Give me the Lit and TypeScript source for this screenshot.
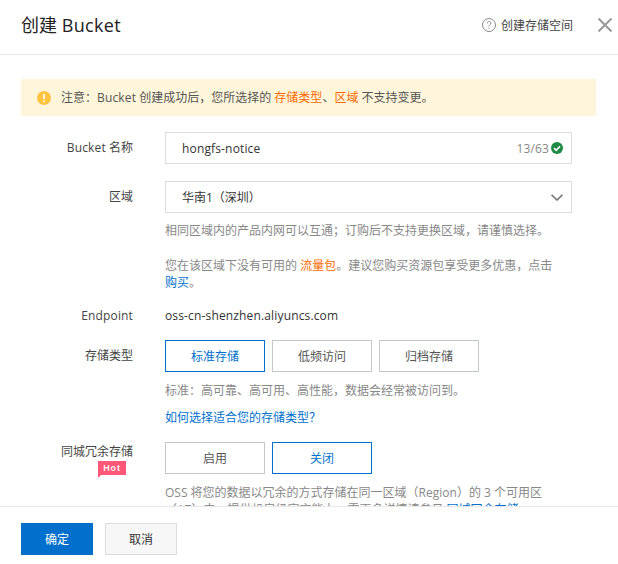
import { LitElement, html, css } from "lit";
import { customElement } from "lit/decorators.js";

@customElement("app-root")
export class AppRoot extends LitElement {
  static styles = css`
    :host {
      display: flex;
      flex-direction: column;
      width: 618px;
      height: 564px;
      background: #fff;
      overflow: hidden;
      font-family: "Open Sans", "Noto Sans CJK SC", sans-serif;
      font-size: 12px;
      line-height: 17px;
      color: #333;
    }
    a { text-decoration: none; }
    .lat { letter-spacing: 0.15px; }
    .header {
      flex: none;
      height: 55px;
      box-sizing: border-box;
      border-bottom: 1px solid #e8e8e8;
      display: flex;
      align-items: center;
      padding: 0 6px 4px 21px;
    }
    .title { font-size: 18px; line-height: 24px; color: #222; flex: 1; }
    .title .lat { letter-spacing: 0.35px; }
    .help { display: flex; align-items: center; gap: 5px; color: #444; margin-right: 25px; }
    .help svg, .close { display: block; }
    .body {
      flex: 1;
      min-height: 0;
      overflow: hidden;
      padding: 24px 22px 0 21px;
    }
    .banner {
      height: 37px;
      background: #fff5db;
      display: flex;
      align-items: center;
      gap: 10px;
      padding-left: 16px;
      color: #555;
      margin-bottom: 16px;
    }
    .hl { color: #ff6a00; }
    .row {
      display: grid;
      grid-template-columns: 112px 407px;
      column-gap: 32px;
    }
    .label { display: flex; flex-direction: column; text-align: right; color: #444; }
    .hot {
      position: relative;
      align-self: flex-end;
      margin: 1px 7px 0 0;
      width: 28px;
      height: 14px;
      background: #ff5777;
      color: #fbeef1;
      font-family: "Liberation Sans", sans-serif;
      font-size: 9px;
      font-weight: 700;
      letter-spacing: 0.8px;
      line-height: 14px;
      text-align: center;
    }
    .hot::after {
      content: "";
      position: absolute;
      left: 0;
      top: 100%;
      border-top: 3px solid #ff5777;
      border-right: 3px solid transparent;
    }
    .field {
      height: 32px;
      box-sizing: border-box;
      border: 1px solid #dcdcdc;
      display: flex;
      align-items: center;
      padding: 0 8px 0 16px;
      color: #333;
      gap: 2px;
    }
    .field .v { flex: 1; }
    .count { color: #888; }
    .help-text { color: #888; margin: 0; }
    .link { color: #0070cc; white-space: nowrap; }
    .btns { display: flex; gap: 7px; }
    .opt {
      width: 100px;
      height: 32px;
      box-sizing: border-box;
      border: 1px solid #c4c6cf;
      background: #fff;
      color: #555;
      font: inherit;
      padding: 0;
    }
    .opt.on { border-color: #0070cc; color: #0070cc; }
    .footer {
      flex: none;
      height: 58px;
      box-sizing: border-box;
      border-top: 1px solid #e8e8e8;
      display: flex;
      gap: 12px;
      padding: 16px 21px 0;
    }
    .fb {
      width: 72px;
      height: 32px;
      box-sizing: border-box;
      font: inherit;
      padding: 0;
    }
    .ok { background: #0070cc; border: 1px solid #0070cc; color: #fff; }
    .cancel { background: #f7f7f7; border: 1px solid #dcdcdc; color: #333; }
    .r-name { margin-bottom: 17px; }
    .r-name .label { padding-top: 7px; }
    .r-region .label { padding-top: 7px; }
    .r-region .help-text.a { margin-top: 9px; }
    .r-region .help-text.b { margin-top: 18px; }
    .r-end { margin-top: 16px; margin-bottom: 16px; }
    .r-type .label { padding-top: 7px; }
    .r-type .help-text { margin-top: 10px; }
    .r-type .how { margin-top: 10px; display: block; }
    .r-zrs { margin-top: 16px; }
    .r-zrs .label { padding-top: 1px; }
    .r-zrs .help-text { margin-top: 10px; }
  `;

  render() {
    return html`
      <div class="header">
        <div class="title">创建 <span class="lat">Bucket</span></div>
        <div class="help">
          <svg width="14" height="14" viewBox="0 0 14 14" fill="none" stroke="#888">
            <circle cx="7" cy="7" r="6.5"/>
            <path d="M5.2 5.4c0-1.1.8-1.8 1.9-1.8s1.8.7 1.8 1.6c0 1.5-1.9 1.5-1.9 3.1" stroke-width="1"/>
            <path d="M7 9.6v1.1" stroke-width="1"/>
          </svg>
          <span>创建存储空间</span>
        </div>
        <svg class="close" width="14" height="14" viewBox="0 0 14 14" fill="none" stroke="#999" stroke-width="2">
          <path d="M.5.5l13 13M13.5.5l-13 13"/>
        </svg>
      </div>
      <div class="body">
        <div class="banner">
          <svg width="14" height="14" viewBox="0 0 14 14">
            <circle cx="7" cy="7" r="7" fill="#ffc440"/>
            <path d="M7 3v5M7 9.6v1.6" stroke="#fff" stroke-width="1.6" fill="none"/>
          </svg>
          <span>注意：<span class="lat">Bucket</span> 创建成功后，您所选择的 <span class="hl">存储类型</span>、<span class="hl">区域</span> 不支持变更。</span>
        </div>
        <div class="row r-name">
          <div class="label"><span><span class="lat">Bucket</span> 名称</span></div>
          <div class="field">
            <span class="v lat">hongfs-notice</span>
            <span class="count lat">13/63</span>
            <svg width="12" height="12" viewBox="0 0 12 12">
              <circle cx="6" cy="6" r="6" fill="#1e8a45"/>
              <path d="M3 6.2l2.2 2.1L9 4.2" stroke="#fff" stroke-width="1.6" fill="none"/>
            </svg>
          </div>
        </div>
        <div class="row r-region">
          <div class="label">区域</div>
          <div>
            <div class="field">
              <span class="v">华南1（深圳）</span>
              <svg width="12" height="7" viewBox="0 0 12 7" fill="none" stroke="#777" stroke-width="1.6">
                <path d="M.6.8L6 6l5.4-5.2"/>
              </svg>
            </div>
            <p class="help-text a">相同区域内的产品内网可以互通；订购后不支持更换区域，请谨慎选择。</p>
            <p class="help-text b">您在该区域下没有可用的 <span class="hl">流量包</span>。建议您购买资源包享受更多优惠，点击 <a class="link">购买</a>。</p>
          </div>
        </div>
        <div class="row r-end">
          <div class="label lat">Endpoint</div>
          <div class="lat">oss-cn-shenzhen.aliyuncs.com</div>
        </div>
        <div class="row r-type">
          <div class="label">存储类型</div>
          <div>
            <div class="btns">
              <button class="opt on">标准存储</button>
              <button class="opt">低频访问</button>
              <button class="opt">归档存储</button>
            </div>
            <p class="help-text">标准：高可靠、高可用、高性能，数据会经常被访问到。</p>
            <a class="link how">如何选择适合您的存储类型？</a>
          </div>
        </div>
        <div class="row r-zrs">
          <div class="label">同城冗余存储<span class="hot">Hot</span></div>
          <div>
            <div class="btns">
              <button class="opt">启用</button>
              <button class="opt on">关闭</button>
            </div>
            <p class="help-text">OSS 将您的数据以冗余的方式存储在同一区域（Region）的 3 个可用区（AZ）中，提供机房级容灾能力，需更多详情请参见 <a class="link">同城冗余存储</a>。</p>
          </div>
        </div>
      </div>
      <div class="footer">
        <button class="fb ok">确定</button>
        <button class="fb cancel">取消</button>
      </div>
    `;
  }
}
